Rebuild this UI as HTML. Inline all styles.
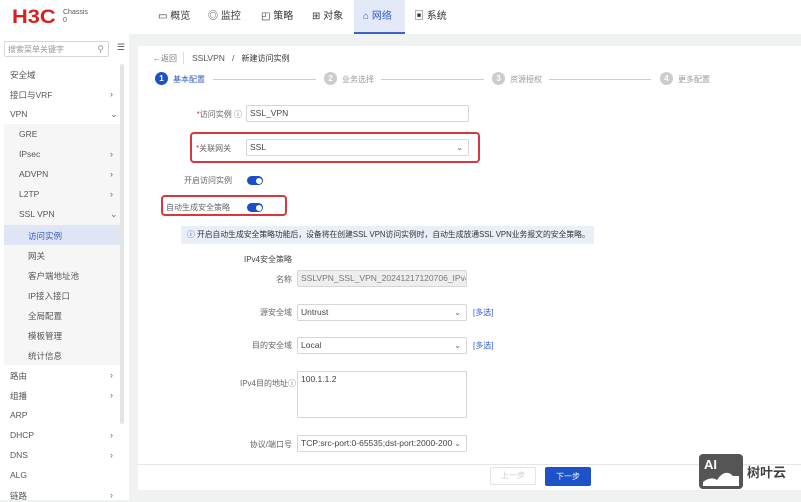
<!DOCTYPE html>
<html><head><meta charset="utf-8"><style>
*{margin:0;padding:0;box-sizing:border-box}
body{width:801px;height:500px;overflow:hidden;background:#f0f1f1;font-family:"Liberation Sans","Noto Sans CJK SC",sans-serif;font-size:8.5px;color:#555;position:relative}
.a{position:absolute;white-space:nowrap}
.hdr{left:0;top:0;width:801px;height:34px;background:#fff}
.nav{top:0;height:34px;line-height:34px;font-size:10px;color:#333}
.side{left:0;top:34px;width:129px;height:466px;background:#fff}
.mi{left:10px;font-size:8.5px;color:#555}
.ar{left:110px;font-size:9px;color:#666}
.card{left:138px;top:46px;width:663px;height:444px;background:#fff}
.inp{border:1px solid #d6d6d6;background:#fff;height:17px;line-height:15px;padding-left:3px;font-size:8.5px;color:#444;border-radius:2px}
.lbl{font-size:8px;color:#666;text-align:right}
.chev{position:absolute;right:5px;top:0;font-size:8px;color:#666}
.tog{width:16px;height:9px;border-radius:5px;background:#1a4fc9}
.tog:after{content:"";position:absolute;right:1.5px;top:1.5px;width:6px;height:6px;border-radius:50%;background:#fff}
.red{border:2px solid #d9363e;border-radius:4px}
.step{width:13px;height:13px;border-radius:50%;background:#ccc;color:#fff;font-size:8px;text-align:center;line-height:13px;font-weight:bold}
.line{height:1px;background:#ccc}
.link{color:#2d5ad6;font-size:8px}
</style></head><body>
<div class="a hdr"></div>
<div class="a" style="left:12px;top:7px;font-size:19px;font-weight:900;color:#d9201f;letter-spacing:0px;transform:scaleX(1.15);transform-origin:left;font-family:'Liberation Sans',sans-serif">H3C</div>
<div class="a" style="left:63px;top:9px;font-size:7px;color:#555;line-height:8px">Chassis<br>0</div>
<div class="a" style="left:354px;top:0;width:51px;height:34px;background:#e3e9f7;border-bottom:2px solid #3a62c8"></div>
<div class="a nav" style="left:158px">▭ 概览</div>
<div class="a nav" style="left:208px">◎ 监控</div>
<div class="a nav" style="left:261px">◰ 策略</div>
<div class="a nav" style="left:312px">⊞ 对象</div>
<div class="a nav" style="left:363px;color:#2f59c4">⌂ 网络</div>
<div class="a nav" style="left:414px">▣ 系统</div>

<div class="a side"></div>
<div class="a inp" style="left:4px;top:41px;width:105px;height:16px;color:#999;font-size:8px">搜索菜单关键字<span style="position:absolute;right:4px;top:0;font-size:9px">⚲</span></div>
<div class="a" style="left:117px;top:42px;font-size:9px;color:#555">☰</div>
<div class="a" style="left:120px;top:64px;width:4px;height:360px;background:#e4e4e4;border-radius:2px"></div>
<div class="a" style="left:4px;top:124px;width:116px;height:241px;background:#f6f6f6"></div>
<div class="a" style="left:4px;top:225px;width:116px;height:20px;background:#dfe5f5"></div>
<div class="a mi" style="top:69px">安全域</div>
<div class="a mi" style="top:89px">接口与VRF</div><div class="a ar" style="top:89px">›</div>
<div class="a mi" style="top:109px">VPN</div><div class="a ar" style="top:109px">⌄</div>
<div class="a mi" style="left:19px;top:129px">GRE</div>
<div class="a mi" style="left:19px;top:149px">IPsec</div><div class="a ar" style="top:149px">›</div>
<div class="a mi" style="left:19px;top:169px">ADVPN</div><div class="a ar" style="top:169px">›</div>
<div class="a mi" style="left:19px;top:189px">L2TP</div><div class="a ar" style="top:189px">›</div>
<div class="a mi" style="left:19px;top:209px">SSL VPN</div><div class="a ar" style="top:209px">⌄</div>
<div class="a mi" style="left:28px;top:230px;color:#2f59c4">访问实例</div>
<div class="a mi" style="left:28px;top:250px">网关</div>
<div class="a mi" style="left:28px;top:270px">客户端地址池</div>
<div class="a mi" style="left:28px;top:290px">IP接入接口</div>
<div class="a mi" style="left:28px;top:310px">全局配置</div>
<div class="a mi" style="left:28px;top:330px">模板管理</div>
<div class="a mi" style="left:28px;top:350px">统计信息</div>
<div class="a mi" style="top:370px">路由</div><div class="a ar" style="top:370px">›</div>
<div class="a mi" style="top:390px">组播</div><div class="a ar" style="top:390px">›</div>
<div class="a mi" style="top:410px">ARP</div>
<div class="a mi" style="top:430px">DHCP</div><div class="a ar" style="top:430px">›</div>
<div class="a mi" style="top:450px">DNS</div><div class="a ar" style="top:450px">›</div>
<div class="a mi" style="top:470px">ALG</div>
<div class="a mi" style="top:490px">链路</div><div class="a ar" style="top:490px">›</div>

<div class="a card"></div>
<div class="a" style="left:153px;top:53px;font-size:8px;color:#777">←返回</div>
<div class="a" style="left:183px;top:52px;width:1px;height:12px;background:#ddd"></div>
<div class="a" style="left:192px;top:53px;font-size:8.5px;color:#555">SSLVPN &nbsp;&nbsp;/&nbsp;&nbsp; <span style="color:#333;font-size:8px">新建访问实例</span></div>

<div class="a step" style="left:155px;top:72px;background:#1e52c9">1</div>
<div class="a" style="left:173px;top:74px;font-size:8px;color:#2f59c4">基本配置</div>
<div class="a line" style="left:213px;top:79px;width:103px"></div>
<div class="a step" style="left:324px;top:72px">2</div>
<div class="a" style="left:342px;top:74px;font-size:8px;color:#999">业务选择</div>
<div class="a line" style="left:381px;top:79px;width:103px"></div>
<div class="a step" style="left:492px;top:72px">3</div>
<div class="a" style="left:510px;top:74px;font-size:8px;color:#999">资源授权</div>
<div class="a line" style="left:549px;top:79px;width:102px"></div>
<div class="a step" style="left:660px;top:72px">4</div>
<div class="a" style="left:678px;top:74px;font-size:8px;color:#999">更多配置</div>

<div class="a lbl" style="left:190px;top:109px;width:52px"><span style="color:#d9363e">*</span>访问实例 ⓘ</div>
<div class="a inp" style="left:246px;top:105px;width:223px">SSL_VPN</div>
<div class="a red" style="left:190px;top:132px;width:290px;height:31px"></div>
<div class="a" style="left:196px;top:143px;font-size:8px;color:#666"><span style="color:#d9363e">*</span>关联网关</div>
<div class="a inp" style="left:246px;top:139px;width:223px">SSL<span class="chev">⌄</span></div>
<div class="a" style="left:184px;top:175px;font-size:8px;color:#666">开启访问实例</div>
<div class="a tog" style="left:247px;top:176px"></div>
<div class="a red" style="left:161px;top:195px;width:126px;height:21px"></div>
<div class="a" style="left:166px;top:202px;font-size:8px;color:#666">自动生成安全策略</div>
<div class="a tog" style="left:247px;top:203px"></div>
<div class="a" style="left:181px;top:226px;width:413px;height:18px;background:#e9eef9;line-height:18px;padding-left:6px;font-size:7.8px;color:#333"><span style="color:#2f59c4">ⓘ</span> 开启自动生成安全策略功能后，设备将在创建SSL VPN访问实例时，自动生成放通SSL VPN业务报文的安全策略。</div>

<div class="a" style="left:244px;top:254px;font-size:8px;color:#444">IPv4安全策略</div>
<div class="a lbl" style="left:240px;top:274px;width:52px">名称</div>
<div class="a inp" style="left:297px;top:270px;width:170px;background:#eee;color:#777;overflow:hidden">SSLVPN_SSL_VPN_20241217120706_IPv4</div>
<div class="a lbl" style="left:240px;top:307px;width:52px">源安全域</div>
<div class="a inp" style="left:297px;top:304px;width:170px">Untrust<span class="chev">⌄</span></div>
<div class="a link" style="left:473px;top:307px">[多选]</div>
<div class="a lbl" style="left:240px;top:340px;width:52px">目的安全域</div>
<div class="a inp" style="left:297px;top:337px;width:170px">Local<span class="chev">⌄</span></div>
<div class="a link" style="left:473px;top:340px">[多选]</div>
<div class="a lbl" style="left:236px;top:378px;width:60px">IPv4目的地址ⓘ</div>
<div class="a inp" style="left:297px;top:371px;width:170px;height:47px">100.1.1.2</div>
<div class="a lbl" style="left:240px;top:439px;width:52px">协议/端口号</div>
<div class="a inp" style="left:297px;top:435px;width:170px;overflow:hidden">TCP:src-port:0-65535;dst-port:2000-2000<span class="chev" style="background:#fff;padding-left:2px">⌄</span></div>

<div class="a" style="left:138px;top:464px;width:663px;height:1px;background:#e6e6e6"></div>
<div class="a" style="left:490px;top:467px;width:46px;height:18px;border:1px solid #e4e4e4;border-radius:2px;color:#ccc;font-size:8px;text-align:center;line-height:16px">上一步</div>
<div class="a" style="left:545px;top:467px;width:46px;height:19px;background:#1e52c9;border-radius:2px;color:#fff;font-size:8px;text-align:center;line-height:19px">下一步</div>

<div class="a" style="left:699px;top:454px;width:44px;height:35px;background:#555;border-radius:4px"></div>
<div class="a" style="left:704px;top:457px;font-size:13px;font-weight:bold;color:#fff">AI</div>
<svg class="a" style="left:703px;top:468px" width="36" height="18"><path d="M0 14 Q8 8 14 12 Q22 0 30 8 L36 8 L36 18 L0 18Z" fill="#fff"/></svg>
<div class="a" style="left:747px;top:462px;font-size:13px;font-weight:bold;color:#444">树叶云</div>
</body></html>
